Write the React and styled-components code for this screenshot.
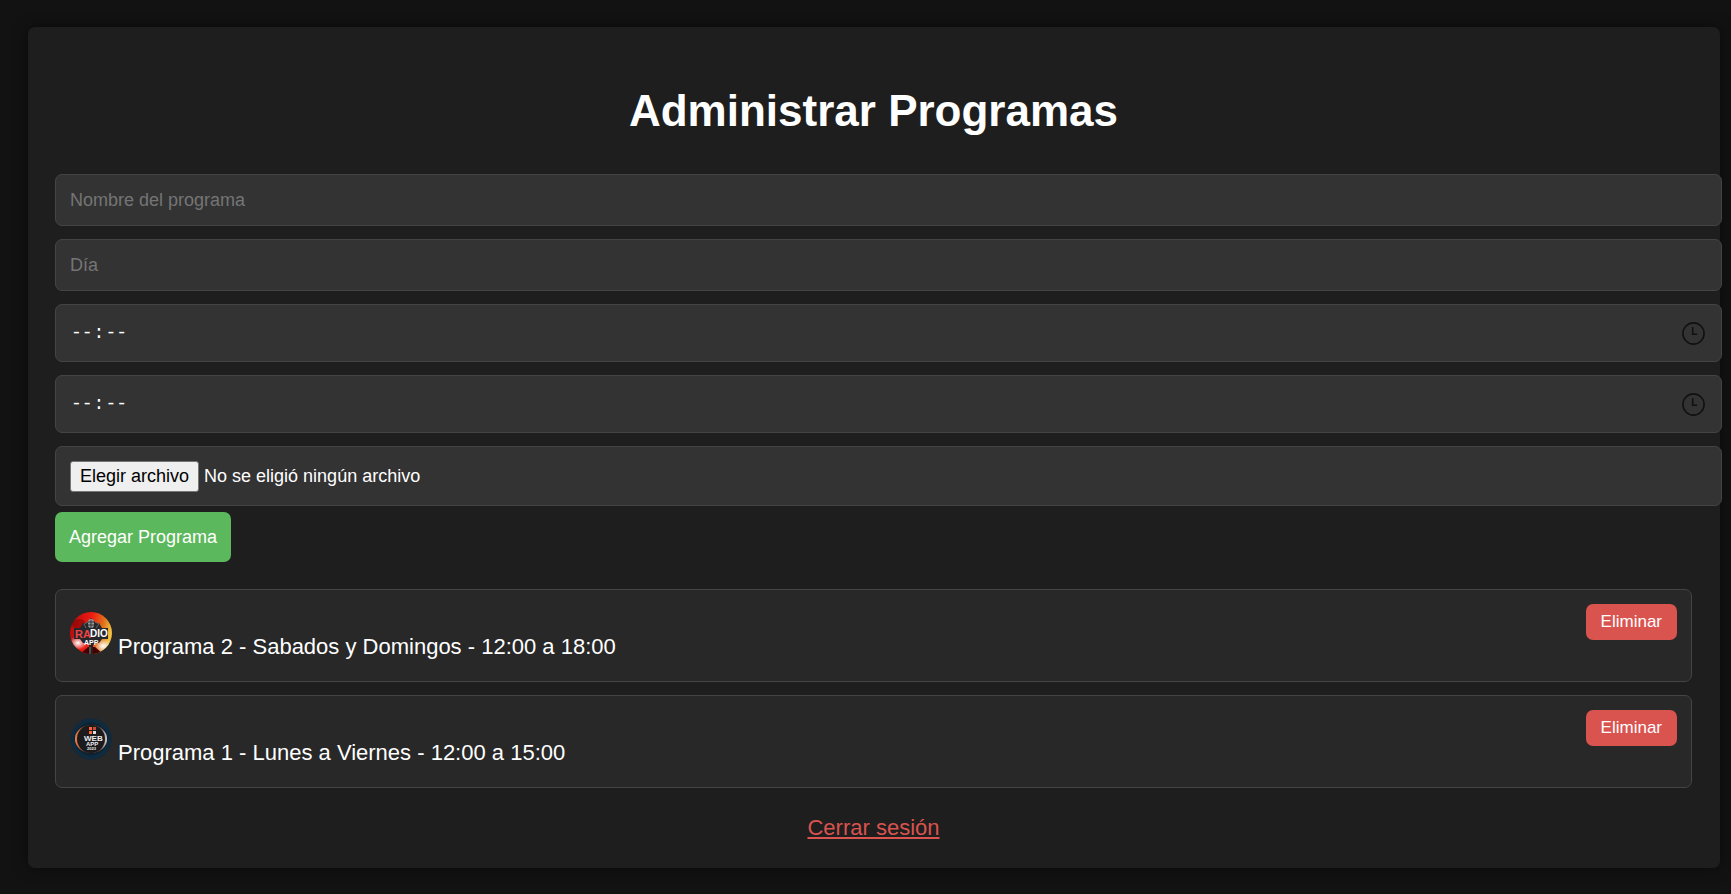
import React from "react";
import styled, { createGlobalStyle } from "styled-components";

const clockIcon =
  "data:image/svg+xml,%3Csvg xmlns='http://www.w3.org/2000/svg' viewBox='0 0 27 27' fill='none' stroke='%23111' stroke-width='1.6'%3E%3Ccircle cx='13.5' cy='13.5' r='10.6'/%3E%3Cpath d='M12.7 7V14.3H17.2'/%3E%3C/svg%3E";

const GlobalStyle = createGlobalStyle`
  body {
    margin: 0;
    background-color: #121212;
    color: #fff;
    font-family: "Liberation Sans", Arial, sans-serif;
    font-size: 22px;
    line-height: 25px;
  }
`;

const Container = styled.main`
  margin: 27px 11px 26px 28px;
  padding: 28px 28px 28px 27px;

  background-color: #1e1e1e;
  border-radius: 7px;
  box-shadow: 0 0 14px rgba(0, 0, 0, 0.5);
`;

const Title = styled.h1`
  margin: 31px 0 38px;

  font-size: 44px;
  line-height: 50px;
  text-align: center;
`;

const Form = styled.form`
  display: flex;
  flex-direction: column;
  align-items: flex-start;
`;

const Field = styled.input`
  box-sizing: content-box;
  width: 100%;
  height: 22px;
  margin: 0 0 13px;
  padding: 14px;

  background-color: #333;
  border: 1px solid #444;
  border-radius: 7px;
  color: #fff;
  font-family: inherit;
  font-size: 18px;

  &::placeholder {
    color: #757575;
  }
`;

const TimeField = styled(Field).attrs({ type: "time" })`
  height: 28px;
  font-family: "Liberation Mono", monospace;

  &::-webkit-datetime-edit-ampm-field {
    display: none;
  }

  &::-webkit-calendar-picker-indicator {
    width: 27px;
    height: 27px;
    padding: 0;
    background: url("${clockIcon}") center / contain no-repeat;
  }
`;

const FileField = styled.label`
  display: flex;
  align-items: center;
  gap: 5px;
  width: 100%;
  height: 30px;
  margin-bottom: 6px;
  padding: 14px;
  position: relative;

  background-color: #333;
  border: 1px solid #444;
  border-radius: 7px;
  font-size: 18px;
`;

const FileInput = styled.input`
  position: absolute;
  inset: 0;
  width: 100%;
  opacity: 0;
`;

const FileButton = styled.span`
  padding: 2px 9px;

  background-color: #efefef;
  border: 1px solid #767676;
  border-radius: 3px;
  color: #000;
`;

const Button = styled.button`
  padding: ${({ $danger }) => ($danger ? "7px 15px" : "14px")};

  background-color: ${({ $danger }) => ($danger ? "#d9534f" : "#5cb85c")};
  border: none;
  border-radius: 7px;
  color: #fff;
  font-family: inherit;
  font-size: ${({ $danger }) => ($danger ? "17px" : "18px")};
  line-height: 22px;
  cursor: pointer;
`;

const List = styled.ul`
  display: flex;
  flex-direction: column;
  gap: 13px;
  margin: 27px 0;
  padding: 0;
  list-style: none;
`;

const Item = styled.li`
  display: flex;
  justify-content: space-between;
  align-items: flex-start;
  padding: 14px;

  background-color: #282828;
  border: 1px solid #444;
  border-radius: 7px;
`;

const Info = styled.div`
  padding: 8px 0;
`;

const Avatar = styled.svg`
  width: 42px;
  height: 42px;
  margin-right: 6px;
  vertical-align: baseline;
`;

const Footer = styled.footer`
  text-align: center;
`;

const LogoutLink = styled.a`
  color: #d9534f;
`;

const RadioLogo = () => (
  <Avatar viewBox="0 0 42 42" role="img" aria-label="Radio App">
    <defs>
      <linearGradient id="radioBg" x1="0" y1="0.1" x2="1" y2="0.3">
        <stop offset="0" stopColor="#b00a0a" />
        <stop offset="0.5" stopColor="#ee1c12" />
        <stop offset="0.8" stopColor="#e0701a" />
        <stop offset="1" stopColor="#f0c040" />
      </linearGradient>
      <radialGradient id="radioGlow">
        <stop offset="0" stopColor="#fff" />
        <stop offset="1" stopColor="#fff" stopOpacity="0" />
      </radialGradient>
      <clipPath id="radioClip">
        <circle cx="21" cy="21" r="21" />
      </clipPath>
    </defs>
    <g clipPath="url(#radioClip)">
      <rect width="42" height="42" fill="url(#radioBg)" />
      <ellipse cx="9" cy="12" rx="7" ry="5" fill="#600" opacity="0.4" />
      <ellipse cx="8" cy="31" rx="9" ry="7" fill="url(#radioGlow)" />
      <ellipse cx="33" cy="34" rx="9" ry="7" fill="url(#radioGlow)" />
      <path d="M10 42 L18 35 H25 L33 42 Z" fill="#400" />
      <path d="M21 6 L26 11 H29 L32 16 H38 V27 H32 L29 31 H25 L21 36 L17 31 H13 L10 27 H4 V16 H10 L13 11 H17 Z" fill="#25272a" />
      <path d="M16 16 L14 12 L18 10 M26 16 L29 12 L25 10" fill="none" stroke="#666" />
      <rect x="18" y="7" width="6" height="9" rx="3" fill="#999" />
      <path d="M18 10 H24 M18 13 H24 M21 8 V16" stroke="#333" />
      <path d="M21 33 V42" stroke="#222" strokeWidth="4" />
      <path d="M20 35 V42" stroke="#777" />
      <g fontFamily="Liberation Sans, sans-serif" fontWeight="700">
        <text x="5" y="26" fontSize="11" fill="#f14444">RA</text>
        <text x="20" y="25" fontSize="10" fill="#fff">DIO</text>
        <text x="14" y="33" fontSize="7" fill="#fff">APP</text>
      </g>
    </g>
  </Avatar>
);

const WebLogo = () => (
  <Avatar viewBox="0 0 42 42" role="img" aria-label="Web App">
    <defs>
      <radialGradient id="webBg">
        <stop offset="0.6" stopColor="#0d1720" />
        <stop offset="0.85" stopColor="#0d2c42" />
        <stop offset="1" stopColor="#182733" />
      </radialGradient>
      <linearGradient id="webRing">
        <stop offset="0" stopColor="#ff8040" />
        <stop offset="0.3" stopColor="#73432e" />
        <stop offset="0.8" stopColor="#77554a" />
        <stop offset="1" stopColor="#d7d5d5" />
      </linearGradient>
    </defs>
    <circle cx="21" cy="21" r="21" fill="url(#webBg)" />
    <ellipse cx="21" cy="21" rx="16" ry="14" fill="url(#webRing)" />
    <circle cx="21" cy="21" r="14" fill="#1b1b1d" />
    <path d="M19 9 H22 V12 H19 Z M19 13 H22 V16 H19 Z" fill="#ff6338" />
    <path d="M23 9 H26 V12 H23 Z" fill="#c84a30" />
    <path d="M23 13 H26 V16 H23 Z" fill="#ddd" />
    <g fontFamily="Liberation Sans, sans-serif" fontWeight="700" fill="#eee">
      <text x="14" y="23" fontSize="8">WEB</text>
      <text x="16" y="28" fontSize="6">APP</text>
      <text x="17" y="32" fontSize="4">2023</text>
    </g>
  </Avatar>
);

const programs = [
  { name: "Programa 2", day: "Sabados y Domingos", start: "12:00", end: "18:00", Logo: RadioLogo },
  { name: "Programa 1", day: "Lunes a Viernes", start: "12:00", end: "15:00", Logo: WebLogo },
];

const App = () => {
  return (
    <>
      <GlobalStyle />
      <Container>
        <Title>Administrar Programas</Title>

        <Form onSubmit={(e) => e.preventDefault()}>
          <Field type="text" placeholder="Nombre del programa" aria-label="Nombre del programa" />
          <Field type="text" placeholder="Día" aria-label="Día" />
          <TimeField aria-label="Hora de inicio" />
          <TimeField aria-label="Hora de fin" />
          <FileField>
            <FileInput type="file" />
            <FileButton>Elegir archivo</FileButton>
            <span>No se eligió ningún archivo</span>
          </FileField>
          <Button type="submit">Agregar Programa</Button>
        </Form>

        <List>
          {programs.map(({ name, day, start, end, Logo }) => (
            <Item key={name}>
              <Info>
                <Logo />
                {`${name} - ${day} - ${start} a ${end}`}
              </Info>
              <Button type="button" $danger>
                Eliminar
              </Button>
            </Item>
          ))}
        </List>

        <Footer>
          <LogoutLink href="#logout">Cerrar sesión</LogoutLink>
        </Footer>
      </Container>
    </>
  );
};

export default App;
